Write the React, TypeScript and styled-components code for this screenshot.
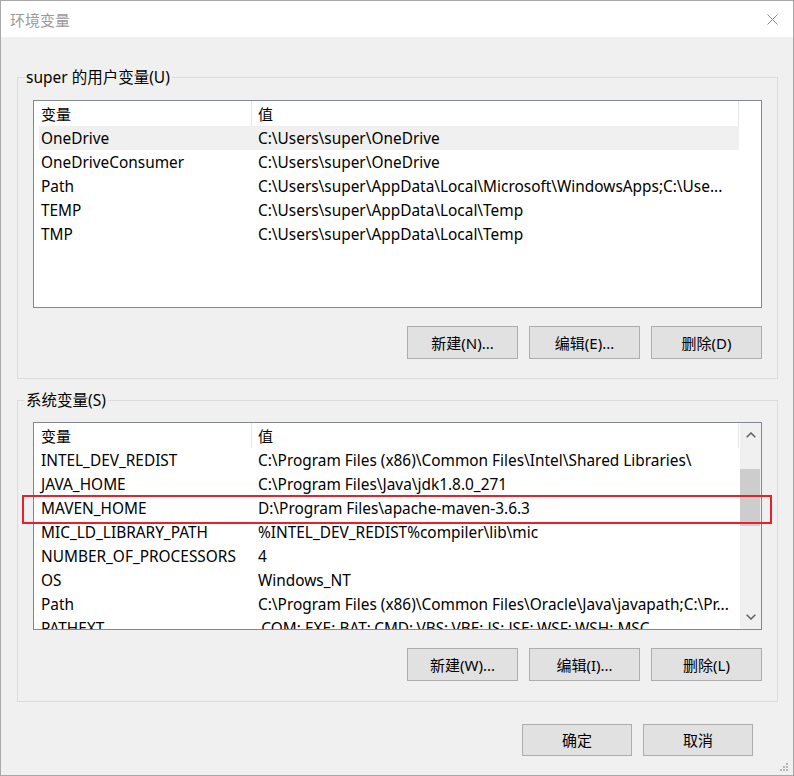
import React from "react";
import styled, { createGlobalStyle } from "styled-components";

const GlobalStyle = createGlobalStyle`
  html, body { margin: 0; padding: 0; background: #ffffff; }
  * { box-sizing: border-box; }
  body {
    font-family: "Noto Sans", "Noto Sans CJK SC", sans-serif;
    font-size: 15px;
    color: #000;
  }
`;

const Window = styled.div`
  position: relative;
  width: 794px;
  height: 776px;
  border: 1px solid #a8a8a8;
  background: #f0f0f0;
  display: flex;
  flex-direction: column;
  overflow: hidden;
`;

const TitleBar = styled.div`
  height: 36px;
  flex: none;
  background: #ffffff;
  display: flex;
  align-items: center;
  justify-content: space-between;
  padding: 0 15px 0 9px;
`;

const Title = styled.span`
  color: #9a9a9a;
  font-size: 15px;
  font-family: "Noto Sans CJK SC", sans-serif;
`;

const CloseIcon = styled.svg`
  width: 11px;
  height: 11px;
  display: block;
`;

const Body = styled.div`
  flex: 1;
  display: flex;
  flex-direction: column;
  padding: 30px 15px 0 16px;
`;

const Group = styled.fieldset<{ $top: number; $bottom: number; $gapTop?: number }>`
  margin: ${(p) => p.$gapTop ?? 0}px 0 0 0;
  width: 761px;
  border: 1px solid #dcdcdc;
  padding: ${(p) => p.$top}px 15px ${(p) => p.$bottom}px 15px;
  min-width: 0;
`;

const Legend = styled.legend`
  margin-left: -8px;
  padding: 0 2px 0 1px;
  line-height: 20px;
  height: 20px;
  font-size: 15.5px;
  font-family: "Noto Sans", "Noto Sans CJK SC", sans-serif;
`;

const List = styled.div`
  width: 729px;
  height: 208px;
  border: 1px solid #828790;
  background: #ffffff;
  display: flex;
  overflow: hidden;
`;

const ListContent = styled.div`
  flex: 1;
  min-width: 0;
  overflow: hidden;
`;

const HeaderRow = styled.div`
  display: grid;
  grid-template-columns: 218px 487px;
  height: 25px;
`;

const HeaderCell = styled.div<{ $pad: number }>`
  line-height: 25px;
  padding-left: ${(p) => p.$pad}px;
  border-right: 1px solid #e5e5e5;
  font-family: "Noto Sans CJK SC", sans-serif;
`;

const Row = styled.div<{ $selected?: boolean }>`
  display: grid;
  grid-template-columns: 213px 487px;
  height: 24px;
  margin-left: 5px;
  width: 700px;
  font-size: 15.4px;
  background: ${(p) => (p.$selected ? "#f0f0f0" : "transparent")};
`;

const NameCell = styled.div`
  line-height: 25px;
  padding-left: 2px;
  white-space: nowrap;
  overflow: hidden;
`;

const ValueCell = styled.div`
  line-height: 25px;
  padding: 0 4px 0 6px;
  white-space: nowrap;
  overflow: hidden;
  text-overflow: ellipsis;
`;

const Scrollbar = styled.div`
  width: 21px;
  flex: none;
  background: #f0f0f0;
  display: flex;
  flex-direction: column;
`;

const ScrollButton = styled.div`
  height: 24px;
  flex: none;
  display: flex;
  align-items: center;
  justify-content: center;
`;

const ScrollTrack = styled.div`
  flex: 1;
`;

const Thumb = styled.div`
  margin-top: 22px;
  height: 57px;
  width: 20px;
  background: #cdcdcd;
`;

const ButtonRow = styled.div<{ $mt: number }>`
  display: flex;
  justify-content: flex-end;
  gap: 11px;
  margin-top: ${(p) => p.$mt}px;
`;

const Button = styled.button<{ $w?: number; $h?: number }>`
  width: ${(p) => p.$w ?? 111}px;
  height: ${(p) => p.$h ?? 33}px;
  background: #e1e1e1;
  border: 1px solid #adadad;
  border-radius: 0;
  padding: 0 0 1px;
  font-family: "Noto Sans", "Noto Sans CJK SC", sans-serif;
  font-size: 15px;
  color: #000;
`;

const Footer = styled.div`
  display: flex;
  justify-content: flex-end;
  gap: 11px;
  margin-top: 22px;
  padding-right: 25px;
`;

const Highlight = styled.div`
  position: absolute;
  left: 21px;
  top: 494px;
  width: 750px;
  height: 29px;
  border: 2px solid #e8202a;
  pointer-events: none;
`;

const Grip = styled.svg`
  position: absolute;
  right: 4px;
  bottom: 3px;
  width: 9px;
  height: 9px;
`;

const Chevron = ({ up }: { up?: boolean }) => (
  <svg width="10" height="6" viewBox="0 0 10 6">
    <path
      d={up ? "M0.7 5.3 L5 1 L9.3 5.3" : "M0.7 0.7 L5 5 L9.3 0.7"}
      fill="none"
      stroke="#606060"
      strokeWidth="1.5"
    />
  </svg>
);

type Item = { name: string; value: string; selected?: boolean };

const userVars: Item[] = [
  { name: "OneDrive", value: "C:\\Users\\super\\OneDrive", selected: true },
  { name: "OneDriveConsumer", value: "C:\\Users\\super\\OneDrive" },
  { name: "Path", value: "C:\\Users\\super\\AppData\\Local\\Microsoft\\WindowsApps;C:\\Use..." },
  { name: "TEMP", value: "C:\\Users\\super\\AppData\\Local\\Temp" },
  { name: "TMP", value: "C:\\Users\\super\\AppData\\Local\\Temp" },
];

const sysVars: Item[] = [
  { name: "INTEL_DEV_REDIST", value: "C:\\Program Files (x86)\\Common Files\\Intel\\Shared Libraries\\" },
  { name: "JAVA_HOME", value: "C:\\Program Files\\Java\\jdk1.8.0_271" },
  { name: "MAVEN_HOME", value: "D:\\Program Files\\apache-maven-3.6.3" },
  { name: "MIC_LD_LIBRARY_PATH", value: "%INTEL_DEV_REDIST%compiler\\lib\\mic" },
  { name: "NUMBER_OF_PROCESSORS", value: "4" },
  { name: "OS", value: "Windows_NT" },
  { name: "Path", value: "C:\\Program Files (x86)\\Common Files\\Oracle\\Java\\javapath;C:\\Pr..." },
  { name: "PATHEXT", value: ".COM;.EXE;.BAT;.CMD;.VBS;.VBE;.JS;.JSE;.WSF;.WSH;.MSC" },
];

const VarList = ({ items, scroll }: { items: Item[]; scroll?: boolean }) => (
  <List>
    <ListContent>
      <HeaderRow>
        <HeaderCell $pad={7}>变量</HeaderCell>
        <HeaderCell $pad={6}>值</HeaderCell>
      </HeaderRow>
      {items.map((it) => (
        <Row key={it.name + it.value} $selected={it.selected}>
          <NameCell>{it.name}</NameCell>
          <ValueCell>{it.value}</ValueCell>
        </Row>
      ))}
    </ListContent>
    {scroll && (
      <Scrollbar>
        <ScrollButton>
          <Chevron up />
        </ScrollButton>
        <ScrollTrack>
          <Thumb />
        </ScrollTrack>
        <ScrollButton>
          <Chevron />
        </ScrollButton>
      </Scrollbar>
    )}
  </List>
);

export default function App() {
  return (
    <>
      <GlobalStyle />
      <Window>
        <TitleBar>
          <Title>环境变量</Title>
          <CloseIcon viewBox="0 0 11 11">
            <path d="M0.5 0.5 L10.5 10.5 M10.5 0.5 L0.5 10.5" stroke="#8c8c8c" strokeWidth="1" fill="none" />
          </CloseIcon>
        </TitleBar>
        <Body>
          <Group $top={13} $bottom={19}>
            <Legend>super 的用户变量(U)</Legend>
            <VarList items={userVars} />
            <ButtonRow $mt={18}>
              <Button>新建(N)...</Button>
              <Button>编辑(E)...</Button>
              <Button>删除(D)</Button>
            </ButtonRow>
          </Group>
          <Group $top={12} $bottom={20} $gapTop={11}>
            <Legend>系统变量(S)</Legend>
            <VarList items={sysVars} scroll />
            <ButtonRow $mt={18}>
              <Button>新建(W)...</Button>
              <Button>编辑(I)...</Button>
              <Button>删除(L)</Button>
            </ButtonRow>
          </Group>
          <Footer>
            <Button $w={110} $h={32}>确定</Button>
            <Button $w={110} $h={32}>取消</Button>
          </Footer>
        </Body>
        <Highlight />
        <Grip viewBox="0 0 9 9">
          <rect x="6" y="0" width="2" height="2" fill="#b4b4b4" />
          <rect x="3" y="3" width="2" height="2" fill="#b4b4b4" />
          <rect x="6" y="3" width="2" height="2" fill="#b4b4b4" />
          <rect x="0" y="6" width="2" height="2" fill="#b4b4b4" />
          <rect x="3" y="6" width="2" height="2" fill="#b4b4b4" />
          <rect x="6" y="6" width="2" height="2" fill="#b4b4b4" />
        </Grip>
      </Window>
    </>
  );
}
